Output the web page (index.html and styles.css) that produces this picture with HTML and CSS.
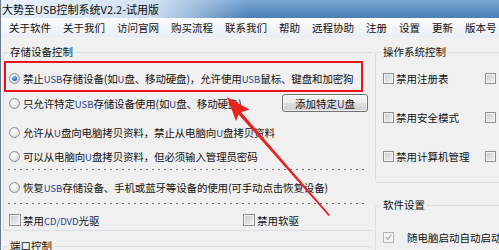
FILE: index.html
```html
<!DOCTYPE html>
<html lang="zh">
<head>
<meta charset="utf-8">
<title>大势至USB控制系统</title>
<link rel="stylesheet" href="styles.css">
</head>
<body>
<div class="window">
  <div class="titlebar">大势至USB控制系统V2.2-试用版</div>
  <div class="menubar">
    <span class="menu-item">关于软件</span>
    <span class="menu-item">关于我们</span>
    <span class="menu-item">访问官网</span>
    <span class="menu-item">购买流程</span>
    <span class="menu-item">联系我们</span>
    <span class="menu-item">帮助</span>
    <span class="menu-item">远程协助</span>
    <span class="menu-item">注册</span>
    <span class="menu-item">设置</span>
    <span class="menu-item">更新</span>
    <span class="menu-item">版本号</span>
  </div>
  <div class="content">
    <div class="col-left">
      <fieldset class="group group-storage">
        <legend>存储设备控制</legend>
        <div class="option opt-1"><span class="radio checked"></span><span class="label">禁止<span class="lat">USB</span>存储设备(如<span class="lat">U</span>盘、移动硬盘)，允许使用<span class="lat">USB</span>鼠标、键盘和加密狗</span></div>
        <div class="option opt-2"><span class="radio"></span><span class="label">只允许特定<span class="lat">USB</span>存储设备使用(如<span class="lat">U</span>盘、移动硬盘)</span><span class="button">添加特定<span class="lat">U</span>盘</span></div>
        <div class="option opt-3"><span class="radio"></span><span class="label">允许从<span class="lat">U</span>盘向电脑拷贝资料，禁止从电脑向<span class="lat">U</span>盘拷贝资料</span></div>
        <div class="option opt-4"><span class="radio"></span><span class="label">可以从电脑向<span class="lat">U</span>盘拷贝资料，但必须输入管理员密码</span></div>
        <div class="dots dots-1"></div>
        <div class="option opt-5"><span class="radio"></span><span class="label">恢复<span class="lat">USB</span>存储设备、手机或蓝牙等设备的使用(可手动点击恢复设备)</span></div>
        <div class="dots dots-2"></div>
        <div class="check-row">
          <div class="check-item"><span class="check"></span><span class="label">禁用<span class="lat">CD/DVD</span>光驱</span></div>
          <div class="check-item"><span class="check"></span><span class="label">禁用软驱</span></div>
        </div>
      </fieldset>
      <fieldset class="group group-port">
        <legend>端口控制</legend>
      </fieldset>
    </div>
    <div class="col-right">
      <fieldset class="group group-os">
        <legend>操作系统控制</legend>
        <div class="os-grid">
          <div class="check-item"><span class="check"></span><span class="label">禁用注册表</span></div>
          <div class="check-item"><span class="check"></span></div>
          <div class="check-item"><span class="check"></span><span class="label">禁用安全模式</span></div>
          <div class="check-item"><span class="check"></span></div>
          <div class="check-item"><span class="check"></span><span class="label">禁用计算机管理</span></div>
          <div class="check-item"><span class="check"></span></div>
        </div>
      </fieldset>
      <fieldset class="group group-soft">
        <legend>软件设置</legend>
        <div class="check-item soft-item"><span class="check disabled-checked"><svg viewBox="0 0 10 10" width="10" height="10"><path d="M2 5.2 L4.2 7.6 L8.2 2.2" fill="none" stroke="#a8a8a8" stroke-width="1.3"/></svg></span><span class="label">随电脑启动自动启动</span></div>
      </fieldset>
    </div>
  </div>
</div>
<div class="highlight"></div>
<svg class="arrow" viewBox="0 0 499 250" width="499" height="250">
  <polygon points="227,97 249.5,109.5 241.2,112.2 330,215 328.6,216 238.6,114.4 236,121" fill="#e8231e"/>
</svg>
</body>
</html>
```

FILE: styles.css
```css
* {
  box-sizing: border-box;
}

html,
body {
  margin: 0;
  padding: 0;
}

body {
  position: relative;
  width: 499px;
  height: 250px;
  overflow: hidden;
  background: #f0f0f0;
  font-family: "Noto Sans CJK SC", "Noto Sans", sans-serif;
  font-size: 10.5px;
  color: #111;
}

.window {
  height: 250px;
  border-left: 1px solid #6b7a8c;
}

.titlebar {
  height: 18px;
  line-height: 18px;
  padding-left: 1px;
  font-size: 11px;
  color: #0a0a0a;
  white-space: nowrap;
  background:
    linear-gradient(to right, rgba(238, 244, 251, 0.96) 0px, rgba(220, 233, 247, 0.9) 150px, rgba(200, 222, 244, 0) 245px),
    linear-gradient(to bottom, #7ba8d6, #4c7fb5);
}

.menubar {
  display: flex;
  align-items: center;
  height: 19px;
  padding-left: 2px;
  white-space: nowrap;
  background: linear-gradient(#fdfdfe, #eaeef4);
}

.menu-item {
  padding: 0 6px;
  line-height: 19px;
}

.content {
  display: flex;
  gap: 3px;
  padding: 8px 0 0 2px;
}

.col-left {
  display: flex;
  flex-direction: column;
  width: 369px;
  flex: none;
}

.col-right {
  display: flex;
  flex-direction: column;
  width: 200px;
  flex: none;
}

.group {
  margin: 0;
  min-width: 0;
  border: 1px solid #d5dfe5;
  border-radius: 3px;
}

.group legend {
  padding: 0 2px;
  line-height: 14px;
  font-size: 10.5px;
  white-space: nowrap;
}

.group-storage {
  padding: 7px 0 0 4px;
  border-right: none;
  border-radius: 3px 0 0 3px;
}

.group-port {
  margin-top: 8px;
  height: 40px;
  padding: 0 0 0 4px;
  border-right: none;
}

.option {
  display: flex;
  align-items: center;
  height: 24px;
  white-space: nowrap;
}

.option .label {
  letter-spacing: -0.15px;
}

.opt-2 {
  margin-top: 1px;
}

.opt-3 {
  margin-top: 5px;
}

.opt-5 {
  margin-top: 5px;
}

.radio {
  display: flex;
  align-items: center;
  justify-content: center;
  flex: none;
  width: 11px;
  height: 11px;
  margin: 0 3px 0 1px;
  border: 1px solid #8b8d90;
  border-radius: 50%;
  background: radial-gradient(circle at 35% 35%, #ffffff 0, #e6e6e6 55%, #cdcdcd 100%);
}

.radio.checked::after {
  content: "";
  width: 5px;
  height: 5px;
  border-radius: 50%;
  background: radial-gradient(circle at 40% 35%, #9ad6ff 0, #2f74c4 50%, #174a94 100%);
}

.lat {
  color: #26408c;
  font-size: 9.5px;
  letter-spacing: 0;
}

.button {
  display: flex;
  align-items: center;
  justify-content: center;
  width: 86px;
  height: 18px;
  margin-left: auto;
  margin-right: 4px;
  border: 1px solid #707070;
  border-radius: 3px;
  background: linear-gradient(#f3f3f3 0%, #ebebeb 48%, #dddddd 52%, #cfcfcf 100%);
  box-shadow: inset 0 0 0 1px rgba(255, 255, 255, 0.7);
}

.button .lat {
  font-size: 10.5px;
}

.dots {
  height: 1px;
  margin-right: 4px;
  background: repeating-linear-gradient(to right, #6f6f6f 0, #6f6f6f 2px, transparent 2px, transparent 6px);
}

.dots-1 {
  margin-top: 1px;
}

.dots-2 {
  margin-top: 4px;
}

.check-row {
  display: grid;
  grid-template-columns: 234px auto;
  align-items: center;
  height: 20px;
  margin-top: 6px;
  padding-left: 1px;
}

.check-item {
  display: flex;
  align-items: center;
  white-space: nowrap;
}

.check {
  flex: none;
  width: 12px;
  height: 12px;
  margin-right: 2px;
  border: 1px solid #8e8f8f;
  background: linear-gradient(135deg, #c8c8c8, #f6f6f6);
  box-shadow: inset 0 0 0 1px #f4f4f4;
}

.group-os {
  padding: 7px 0 14px 5px;
  width: 200px;
}

.group-os legend,
.group-soft legend {
  padding: 0 2px;
}

.os-grid {
  display: grid;
  grid-template-columns: 102px auto;
  grid-auto-rows: 24px;
  row-gap: 15px;
  align-items: center;
  padding-left: 2px;
}

.os-grid .check {
  width: 11px;
  height: 11px;
}

.group-soft {
  margin-top: 15px;
  padding: 13px 0 0 5px;
  width: 200px;
  height: 60px;
}

.soft-item {
  height: 24px;
  padding-left: 2px;
}

.check.disabled-checked {
  display: flex;
  align-items: center;
  justify-content: center;
  width: 11px;
  height: 11px;
  margin-right: 13px;
  border-color: #b4b4b4;
  background: #f4f4f4;
  box-shadow: none;
}

.highlight {
  position: absolute;
  left: 4px;
  top: 61px;
  width: 359px;
  height: 31px;
  border: 2.5px solid #e8141b;
}

.arrow {
  position: absolute;
  left: 0;
  top: 0;
  pointer-events: none;
}
```
